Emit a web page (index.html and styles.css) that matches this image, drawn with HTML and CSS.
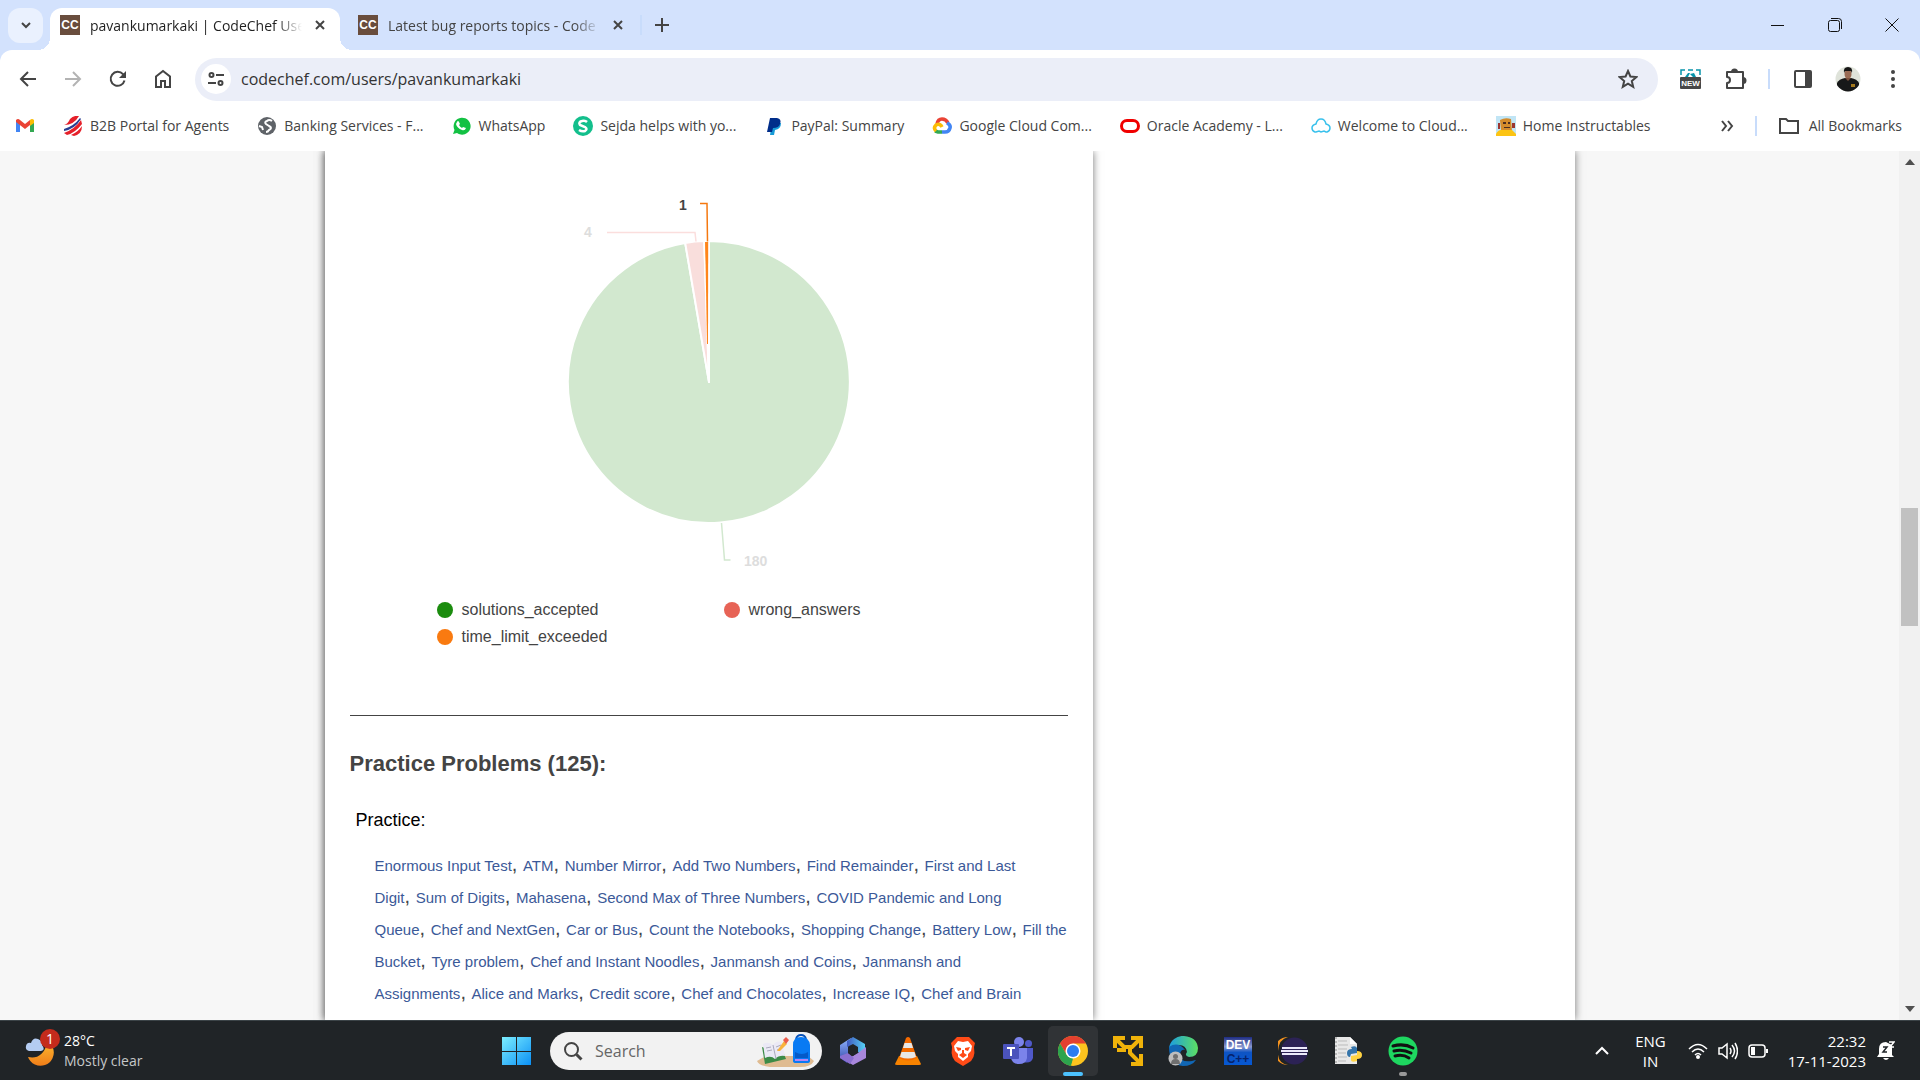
FILE: index.html
```html
<!DOCTYPE html>
<html lang="en">
<head>
  <meta charset="UTF-8">
  <title>pavankumarkaki | CodeChef User Profile</title>
  <link rel="stylesheet" href="styles.css">
</head>
<body>
  <!-- tab strip -->
  <header class="tab-strip">
    <button class="tab-search" aria-label="Search tabs"><svg width="12" height="12" viewBox="0 0 12 12"><path d="M2 4l4 4 4-4" class="line"/></svg></button>
    <div class="tab active">
      <span class="favicon">CC</span>
      <span class="tab-title">pavankumarkaki | CodeChef Use</span>
      <button class="tab-close" aria-label="Close tab"><svg width="12" height="12" viewBox="0 0 12 12"><path d="M2 2l8 8M10 2l-8 8" class="line"/></svg></button>
    </div>
    <div class="tab">
      <span class="favicon">CC</span>
      <span class="tab-title">Latest bug reports topics - Code</span>
      <button class="tab-close" aria-label="Close tab"><svg width="12" height="12" viewBox="0 0 12 12"><path d="M2 2l8 8M10 2l-8 8" class="line"/></svg></button>
    </div>
    <span class="divider"></span>
    <button class="new-tab" aria-label="New tab"><svg width="14" height="14" viewBox="0 0 14 14"><path d="M7 0v14M0 7h14" class="line"/></svg></button>
    <div class="window-buttons">
      <button aria-label="Minimize"><svg width="14" height="14" viewBox="0 0 14 14"><path d="M0 7.500h13" class="line thin"/></svg></button>
      <button aria-label="Restore"><svg width="14" height="14" viewBox="0 0 14 14"><rect x="0.500" y="2.500" width="11" height="11" rx="2" class="line thin"/><path d="M3 .5h7.500a3 3 0 0 1 3 3V11" class="line thin"/></svg></button>
      <button aria-label="Close"><svg width="14" height="14" viewBox="0 0 14 14"><path d="M.5.5l13 13M13.500.5l-13 13" class="line thin"/></svg></button>
    </div>
  </header>

  <!-- toolbar -->
  <div class="toolbar-wrap">
  <nav class="toolbar">
    <button aria-label="Back"><svg width="18" height="18" viewBox="0 0 18 18"><path d="M9 2L2 9l7 7M2 9h15" class="line"/></svg></button>
    <button class="disabled" aria-label="Forward"><svg width="18" height="18" viewBox="0 0 18 18"><path d="M9 2l7 7-7 7M16 9H1" class="line"/></svg></button>
    <button aria-label="Reload"><svg width="18" height="18" viewBox="0 0 18 18"><path d="M15.500 10.500A7 7 0 1 1 14 4.200L15.500 6" class="line"/><path d="M17 1v7h-7z" fill="#444"/></svg></button>
    <button aria-label="Home"><svg width="18" height="20" viewBox="0 0 18 20"><path d="M2 7.500l7-5.500 7 5.500V18h-5v-6H7v6H2z" class="line"/></svg></button>
    <div class="address-bar">
      <button class="site-info" aria-label="Site information"><svg width="16" height="16" viewBox="0 0 16 16"><circle cx="3.500" cy="4" r="2" class="line"/><path d="M8 4h8M0 12h8" class="line"/><circle cx="12.500" cy="12" r="2" class="line"/></svg></button>
      <input type="text" aria-label="Address" value="codechef.com/users/pavankumarkaki">
      <button class="star" aria-label="Bookmark this tab"><svg width="20" height="20" viewBox="0 0 20 20"><path d="M10 2l2.400 5.500 6 .5-4.600 4 1.400 5.800L10 14.700l-5.200 3.100L6.200 12 1.600 8l6-.5z" class="line"/></svg></button>
    </div>
    <button aria-label="Screenshot extension"><svg width="21" height="20" viewBox="0 0 21 20"><path d="M1 6V1h4M8 1h5M16 1h4v5" fill="none" stroke="#0794ab" stroke-width="1.500"/><path d="M5 8l3-4h2l-2 4zM10 5l4-1 2 4h-3z" fill="#0794ab"/><rect y="8" width="21" height="12" rx="1" fill="#484848"/><text x="10.500" y="17" class="new-text">NEW</text></svg></button>
    <button aria-label="Extensions"><svg width="22" height="22" viewBox="0 0 22 22"><path d="M2 4h16v16H2v-5a3 3 0 0 0 0-6z" class="line" stroke-linejoin="round"/><path d="M6 4a3.500 3.500 0 0 1 7 0zM18 9a3.500 3.500 0 0 1 0 7z" fill="#444"/></svg></button>
    <span class="divider"></span>
    <button aria-label="Side panel"><svg width="18" height="18" viewBox="0 0 18 18"><rect x="1" y="1" width="16" height="16" rx="1" class="line"/><path d="M11 1h6v16h-6z" fill="#444"/></svg></button>
    <button aria-label="Profile"><svg width="26" height="26" viewBox="0 0 26 26"><clipPath id="face"><circle cx="13" cy="13" r="12.500"/></clipPath><g clip-path="url(#face)"><path d="M0 0h26v26H0z" fill="#dfe3da"/><path d="M2 26V17q2-4 8-5h6q6 1 8 5v9z" fill="#171819"/><ellipse cx="13" cy="8" rx="3.500" ry="5" fill="#9a6c55"/><path d="M9 7q-1-6 4-6t4 6l-1-2h-6z" fill="#161616"/><path d="M10 12l3 3 3-3z" fill="#7c513d"/><path d="M16 18h4v3h-4z" fill="#a3791f"/></g></svg></button>
    <button aria-label="Menu"><svg width="6" height="20" viewBox="0 0 6 20"><circle cx="3" cy="3" r="2" fill="#444"/><circle cx="3" cy="10" r="2" fill="#444"/><circle cx="3" cy="17" r="2" fill="#444"/></svg></button>
  </nav>

  <!-- bookmarks -->
  <nav class="bookmarks">
    <a href="#" aria-label="Gmail"><svg width="20" height="20" viewBox="0 0 20 20"><path d="M1 4v12h4V8z" fill="#4285f4"/><path d="M15 8v8h4V4z" fill="#34a853"/><path d="M1 4q2-2 4 0l5 4 5-4v5l-5 4-9-7z" fill="#ea4335"/><path d="M15 4q2-2 4 0v3l-4 3z" fill="#fbbc04"/></svg></a>
    <a href="#"><svg width="20" height="20" viewBox="0 0 20 20"><path d="M1 9Q5 8 7 3q4-4 9-3Q11 9 1 9z" fill="#e5202a"/><path d="M1 17Q12 13 18 4l1 4Q12 17 4 19z" fill="#e5202a"/><path d="M1 13Q11 10 17 2l1 1Q12 13 1 15z" fill="#283d91"/><path d="M8 19q7-3 11-9 0 8-8 10z" fill="#e5202a"/></svg>B2B Portal for Agents</a>
    <a href="#"><svg width="20" height="20" viewBox="0 0 20 20"><circle cx="10" cy="10" r="9" fill="#5f6368"/><path d="M15 5q-3-2-5 0-3 1-1 3l3 2q4 2 0 4-1 2-3 2M2 10l3 1 1 3" fill="none" stroke="#fff" stroke-width="2"/></svg>Banking Services - F...</a>
    <a href="#"><svg width="20" height="20" viewBox="0 0 20 20"><path d="M2 18l1.500-4A8.500 8.500 0 1 1 6 17z" fill="#13c143"/><path d="M6 6q1-2 2 0l1 2-1 1q1 2 3 3l1-1 3 1q-1 3-4 2-5-2-6-6z" fill="#fff"/></svg>WhatsApp</a>
    <a href="#"><svg width="20" height="20" viewBox="0 0 20 20"><circle cx="10" cy="10" r="10" fill="#13bf8c"/><path d="M14 6Q12 4 9 5 5 6 7 9l5 2q3 2 0 4-3 1-6-1" fill="none" stroke="#fff" stroke-width="2.500"/></svg>Sejda helps with yo...</a>
    <a href="#"><svg width="20" height="20" viewBox="0 0 20 20"><path d="M8 7h9q0 6-6 7l-1 5H6z" fill="#179bd7"/><path d="M6 2h7q5 1 3 6-1 4-7 4l-1 4H3z" fill="#002d8a"/></svg>PayPal: Summary</a>
    <a href="#"><svg width="20" height="20" viewBox="0 0 20 20"><g fill="none" stroke-width="3.500"><path d="M5 8q1-5 5-5t6 4" stroke="#ea4335"/><path d="M15 7q4 2 3 5-1 4-5 4h-3" stroke="#4285f4"/><path d="M10 16H6l-3-1" stroke="#34a853"/><path d="M4 15q-3-3 0-6 4-2 6 2" stroke="#fbbc04"/></g></svg>Google Cloud Com...</a>
    <a href="#"><svg width="20" height="20" viewBox="0 0 20 20"><rect x="1.500" y="4.500" width="17" height="11" rx="5.500" fill="none" stroke="#f00000" stroke-width="3"/></svg>Oracle Academy - L...</a>
    <a href="#"><svg width="20" height="20" viewBox="0 0 20 20"><path d="M5 16H4q-3-1-3-4t4-4q1-5 5-5t5 5q4 1 4 4t-3 4h-1l-2-1-3 1-2-1z" fill="none" stroke="#39c1ec" stroke-width="1.500"/></svg>Welcome to Cloud...</a>
    <a href="#"><svg width="20" height="20" viewBox="0 0 20 20"><path d="M0 0h20v20H0z" fill="#c1e5f5"/><path d="M4 4q5-3 11-1l1 12H5z" fill="#d48c2c"/><path d="M7 6h3v2H7zM12 6h2v2h-2zM8 11h6v1H8z" fill="#4a2d20"/><path d="M0 18q2-4 5-4h11l4 4v2H0z" fill="#fcc413"/><path d="M2 7h2v6H2zM16 7h3v5h-3z" fill="#9c3632"/></svg>Home Instructables</a>
    <button class="more" aria-label="More bookmarks"><svg width="14" height="12" viewBox="0 0 14 12"><path d="M2 1l4 5-4 5M8 1l4 5-4 5" class="line"/></svg></button>
    <span class="divider"></span>
    <a href="#" class="all-bookmarks"><svg width="22" height="18" viewBox="0 0 22 18"><path d="M2 2h6l2 2h10v12H2z" class="line"/></svg>All Bookmarks</a>
  </nav>
  </div>

  <!-- page content -->
  <div class="viewport">
    <main class="page">
      <div class="container">
        <section class="profile">
          <svg class="pie" viewBox="0 0 718 434" role="img" aria-label="Submissions">
            <g stroke="#fff" stroke-width="2" stroke-linejoin="round">
              <path d="M359 231V90A141 141 0 1 1 335.200 92z" fill="#d2e8cf"/>
              <path d="M359 231L335.200 92A141 141 0 0 1 354.200 90.100z" fill="#f9dedc"/>
              <path d="M359 231L354.200 90.100A141 141 0 0 1 359 90z" fill="#ff851b"/>
            </g>
            <path d="M355.200 91h3l-.2 102h-1z" fill="#ff851b"/>
            <path d="M350 52.500h7l.5 38" fill="none" stroke="#f5780f" stroke-width="1.500"/>
            <path d="M257 81.500h88l1 9" fill="none" stroke="#fbdedd" stroke-width="1.500"/>
            <path d="M371.500 372l3 37h6" fill="none" stroke="#d2e8cf" stroke-width="1.500"/>
            <text x="329" y="59" class="value">1</text>
            <text x="234" y="86" class="value faded">4</text>
            <text x="394" y="415" class="value faded">180</text>
          </svg>
          <ul class="legend">
            <li><span class="dot green"></span>solutions_accepted</li>
            <li><span class="dot red"></span>wrong_answers</li>
            <li><span class="dot orange"></span>time_limit_exceeded</li>
          </ul>
          <hr>
          <h3>Practice Problems (125):</h3>
          <h5>Practice:</h5>
          <p class="problems">
            <a href="#">Enormous Input Test</a>, <a href="#">ATM</a>, <a href="#">Number Mirror</a>, <a href="#">Add Two Numbers</a>, <a href="#">Find Remainder</a>, <a href="#">First and Last<br>Digit</a>, <a href="#">Sum of Digits</a>, <a href="#">Mahasena</a>, <a href="#">Second Max of Three Numbers</a>, <a href="#">COVID Pandemic and Long<br>Queue</a>, <a href="#">Chef and NextGen</a>, <a href="#">Car or Bus</a>, <a href="#">Count the Notebooks</a>, <a href="#">Shopping Change</a>, <a href="#">Battery Low</a>, <a href="#">Fill the<br>Bucket</a>, <a href="#">Tyre problem</a>, <a href="#">Chef and Instant Noodles</a>, <a href="#">Janmansh and Coins</a>, <a href="#">Janmansh and<br>Assignments</a>, <a href="#">Alice and Marks</a>, <a href="#">Credit score</a>, <a href="#">Chef and Chocolates</a>, <a href="#">Increase IQ</a>, <a href="#">Chef and Brain</a>
          </p>
        </section>
      </div>
    </main>
    <div class="scrollbar">
      <svg width="10" height="6" viewBox="0 0 10 6"><path d="M0 6l5-6 5 6z" fill="#505050"/></svg>
      <div class="track"><div class="thumb"></div></div>
      <svg width="10" height="6" viewBox="0 0 10 6"><path d="M0 0l5 6 5-6z" fill="#505050"/></svg>
    </div>
  </div>

  <!-- taskbar -->
  <footer class="taskbar">
    <button class="weather">
      <span class="weather-icon"><svg width="32" height="32" viewBox="0 0 32 32"><defs><linearGradient id="moon" x2="0" y2="1"><stop stop-color="#fcb42d"/><stop offset="1" stop-color="#ef7d19"/></linearGradient></defs><path d="M28 13a13 13 0 1 1-25 9q14 3 19-13z" fill="url(#moon)"/><path d="M4 16q-4-1-3-5t5-3q2-6 7-4t4 6q4 5-1 6z" fill="#b4ccf2"/></svg><span class="badge">1</span></span>
      <span class="weather-text"><span>28°C</span><span class="dim">Mostly clear</span></span>
    </button>
    <div class="apps">
      <button class="app" aria-label="Start"><svg width="30" height="30" viewBox="0 0 30 30"><defs><linearGradient id="win" x2="1" y2="1"><stop stop-color="#7ceeff"/><stop offset="1" stop-color="#0b90f5"/></linearGradient></defs><path d="M0 1h14v14H0zM15 1h14v14H15zM0 16h14v13H0zM15 16h14v13H15z" fill="url(#win)"/></svg></button>
      <label class="search">
        <svg width="20" height="20" viewBox="0 0 20 20"><circle cx="8.500" cy="8.500" r="6.500" class="line"/><path d="M13.500 13.500l5 5" class="line bold"/></svg>
        <input type="text" placeholder="Search" aria-label="Search">
        <svg width="60" height="34" viewBox="0 0 60 34"><path d="M2 27l9-5h42l6 5q-3 6-14 6H15Q4 32 2 27z" fill="#dfbb91"/><path d="M7 13l3 17 21-5-2-5z" fill="#3c8b47"/><path d="M8 10q5-3 10 1 3-5 9-3l3 14q-6-1-10 3-4-4-10-1z" fill="#ebe9f5"/><path d="M18 11l3 14M11 14l5-1M12 17l5-1M21 13l5-2M22 16l5-2" stroke="#a9a9bd"/><path d="M22 17l7-10 3 3-7 7z" fill="#f8b33c"/><path d="M28 6l3-3 3 3-3 4z" fill="#eb5c4c"/><path d="M41 5q1-4 5-4t5 4" fill="none" stroke="#0751b8" stroke-width="2"/><path d="M38 27V11q0-8 8-8t9 8v16q0 2-3 2H41q-3 0-3-2z" fill="#087af3"/><path d="M40 18q7 4 13 0v6H40z" fill="#055ac8"/><path d="M40 25h13v2H40z" fill="#b384f5"/></svg>
      </label>
      <button class="app" aria-label="Microsoft 365"><svg width="30" height="30" viewBox="0 0 30 30"><defs><linearGradient id="m365" x2="0" y2="1"><stop stop-color="#8fb4ff"/><stop offset="1" stop-color="#3446a8"/></linearGradient><linearGradient id="m365b" x2="1"><stop stop-color="#4058c0"/><stop offset="1" stop-color="#55d0f5"/></linearGradient></defs><path d="M2 9L13 2l-3 9v9l-1 7-7-5z" fill="url(#m365)"/><path d="M9 5l6-4 12 7v13l-7-5v-5l-5-3-6 3z" fill="url(#m365b)"/><path d="M13 21l7-4 8-6v11l-13 7-9-5z" fill="#a887dc"/><path d="M2 20l8-3 6 5-4 6-10-6z" fill="#8a6fd0"/><path d="M15 10l4 2v5l-4 3-5-3v-5z" fill="#202427"/></svg></button>
      <button class="app" aria-label="VLC"><svg width="28" height="30" viewBox="0 0 28 30"><path d="M5 20h18l4 8q0 1-2 1H3q-2 0-2-1z" fill="#f78300"/><path d="M12 2q2-2 4 0l7 20q-9 5-18 0z" fill="#f56a00"/><path d="M10.500 7h7l1.500 5H9zM7.500 16h13l1.500 5q-8 3-16 0z" fill="#e7e7e7"/></svg></button>
      <button class="app" aria-label="Brave"><svg width="28" height="30" viewBox="0 0 28 30"><path d="M8 1h12l3 3 3 3-1 4q2 12-6 16l-5 3-5-3Q1 23 3 11L2 7l3-3z" fill="#ff4b17"/><path d="M9 5l5 1 5-1 4 5-1 5-3 3v3l-5 4-5-4v-3l-3-3-1-5z" fill="#fff"/><path d="M7 11l5 1v2l-3 1zM21 11l-5 1v2l3 1zM13 14h2v3l3 2-4 3-4-3 3-2z" fill="#ff4b17"/></svg></button>
      <button class="app" aria-label="Teams"><svg width="30" height="28" viewBox="0 0 30 28"><circle cx="16" cy="5" r="5" fill="#7b83eb"/><circle cx="25.500" cy="6.500" r="3.500" fill="#5059c9"/><path d="M20 11h10v10q-2 6-10 4z" fill="#5059c9"/><path d="M8 11h16v10q-1 6-8 6t-8-6z" fill="#7b83eb"/><rect y="7" width="16" height="15" rx="1" fill="#4b53bc"/><path d="M4 11h8M8 11v8" stroke="#fff" stroke-width="2"/></svg></button>
      <button class="app running current" aria-label="Chrome"><svg width="30" height="30" viewBox="0 0 30 30"><circle cx="15" cy="15" r="15" fill="#fcc31e"/><path d="M2 7.500a15 15 0 0 1 26 0H15l-6.500 11z" fill="#e3402f"/><path d="M2 7.500l6.500 11L15 22.500 13 30A15 15 0 0 1 2 7.500z" fill="#2da44e"/><path d="M13 30l8.500-11.500L17 19z" fill="#fcc31e"/><circle cx="15" cy="15" r="7.500" fill="#fff"/><circle cx="15" cy="15" r="6" fill="#2d7cf0"/></svg></button>
      <button class="app" aria-label="VMware"><svg width="30" height="30" viewBox="0 0 30 30"><g fill="none" stroke="#f0b30a" stroke-width="4"><path d="M2 12V2h10M18 2h10v10M28 18v10H18"/><path d="M2 2l9 9h8l9-9M17 12v5l11 11M11 11v3H4" /></g></svg></button>
      <button class="app" aria-label="Edge"><svg width="30" height="30" viewBox="0 0 30 30"><defs><linearGradient id="edge" x2="1"><stop stop-color="#1c9de0"/><stop offset="1" stop-color="#5ddf62"/></linearGradient></defs><path d="M1 12A14 14 0 0 1 16 0q13 1 14 12 0 9-9 9-5-1-2-5-1-7-8-7-6 0-10 3z" fill="url(#edge)"/><path d="M1 11q9-6 16 3-4-1-5 4 0 9 12 7 3-1 4-1-4 6-13 6Q1 29 1 11z" fill="#1167b5"/><circle cx="7.500" cy="22.500" r="7" fill="#bdbdbd"/><circle cx="7.500" cy="20.500" r="2.500" fill="#6f6f6f"/><path d="M3 28q0-5 4.500-5t4.500 5z" fill="#6f6f6f"/></svg></button>
      <button class="app" aria-label="Dev-C++"><svg width="30" height="30" viewBox="0 0 30 30"><defs><linearGradient id="dev" x2="0" y2="1"><stop stop-color="#1d2c83"/><stop offset=".35" stop-color="#8a98cf"/><stop offset=".55" stop-color="#0e54c4"/><stop offset="1" stop-color="#0658d3"/></linearGradient></defs><path d="M1 1h28v28H1z" fill="url(#dev)"/><text x="15" y="13" class="dev-text">DEV</text><text x="15" y="27" class="dev-text dark">C++</text></svg></button>
      <button class="app" aria-label="Eclipse"><svg width="30" height="30" viewBox="0 0 30 30"><path d="M10 1a14 14 0 0 0 0 28Q-1 27 0 15T10 1z" fill="#f7941e"/><circle cx="16.500" cy="15" r="13.500" fill="#2c2255"/><path d="M4 11h25v2H4zM3 14h27v2H3zM4 17h25v2H4z" fill="#eceafa"/></svg></button>
      <button class="app" aria-label="Python"><svg width="30" height="30" viewBox="0 0 30 30"><path d="M2 1h15l7 7v20H2z" fill="#e8e8e8"/><path d="M5 5h9M5 9h10M5 13h9M5 17h8M5 21h9M5 25h8" stroke="#bbb"/><path d="M3 1v27" stroke="#888" stroke-dasharray="2 2"/><path d="M17 1v7h7z" fill="#fff"/><path d="M18 11q5-2 6 1v5l-6 1-1 3q-3 0-3-4t5-4z" fill="#3675aa"/><path d="M24 15q5 0 5 4t-5 4v2q-6 2-6-1v-4l6-1z" fill="#ffd343"/></svg></button>
      <button class="app running" aria-label="Spotify"><svg width="30" height="30" viewBox="0 0 30 30"><circle cx="15" cy="15" r="14.500" fill="#1ed760"/><path d="M5 10q11-3 20 2M6 15q9-2 17 2M7 20q8-2 14 2" fill="none" stroke="#111" stroke-width="3" stroke-linecap="round"/></svg></button>
    </div>
    <div class="tray">
      <button aria-label="Show hidden icons"><svg width="14" height="9" viewBox="0 0 14 9"><path d="M1 8l6-6 6 6" class="line white"/></svg></button>
      <button class="lang"><span>ENG</span><span>IN</span></button>
      <button class="status" aria-label="Network, volume and battery">
        <svg width="20" height="16" viewBox="0 0 20 16"><path d="M1 6q9-9 18 0M4 9q6-6 12 0M7 12q3-3 6 0" class="line white light"/><circle cx="10" cy="14" r="2" fill="#fff"/></svg>
        <svg width="20" height="18" viewBox="0 0 20 18"><path d="M1 6h3l5-4v14l-5-4H1zM12 6q2 3 0 6M14 3q5 6 0 12M17 1q5 8 0 16" class="line white light"/></svg>
        <svg width="20" height="14" viewBox="0 0 20 14"><rect x="1" y="1" width="16" height="12" rx="3" class="line white light"/><path d="M3 3h4v8H3zM18 5h2v4h-2z" fill="#fff"/></svg>
      </button>
      <button class="clock"><span>22:32</span><span>17-11-2023</span></button>
      <button aria-label="Notifications"><svg width="18" height="20" viewBox="0 0 18 20"><path d="M2 8q0-7 7-7l6 3v10l2 2H0l2-3zM6 17h6q-3 4-6 0z" fill="#fff"/><path d="M6 6h4l-4 5h4" fill="none" stroke="#20262a" stroke-width="1.500"/><path d="M12 1h5l-4 5h4" fill="none" stroke="#fff" stroke-width="1.500"/></svg></button>
    </div>
  </footer>
</body>
</html>
```
FILE: styles.css
```css
* {
  box-sizing: border-box;
}
body {
  margin: 0;
  height: 100vh;
  display: flex;
  flex-direction: column;
  overflow: hidden;
  font-family: "Open Sans", "Noto Sans", sans-serif;
  font-size: 14px;
  color: #444;
}
button {
  border: none;
  padding: 0;
  background: none;
  color: inherit;
  font: inherit;
  display: flex;
  align-items: center;
  justify-content: center;
}
a {
  color: inherit;
  text-decoration: none;
}
svg {
  display: block;
  flex-shrink: 0;
}
.line {
  fill: none;
  stroke: #444;
  stroke-width: 2;
}
.line.bold {
  stroke-width: 3;
}
.line.thin {
  stroke: #111;
  stroke-width: 1;
}
.line.white {
  stroke: #fff;
}
.line.light {
  stroke-width: 1.5;
}
.divider {
  width: 2px;
  height: 20px;
  background: #c8dcfb;
}

/* tabs */
.tab-strip {
  height: 50px;
  display: flex;
  align-items: center;
  padding-left: 8px;
  background: #d3e2fd;
}
.tab-search {
  width: 35px;
  height: 35px;
  margin-right: 7px;
  border-radius: 12px;
  background: #eaf1fe;
}
.tab {
  width: 290px;
  height: 42px;
  display: flex;
  align-items: center;
  gap: 10px;
  padding: 0 12px 0 10px;
}
.tab + .tab {
  width: 300px;
  padding: 0 14px 0 18px;
}
.tab.active {
  align-self: flex-end;
  position: relative;
  padding-bottom: 8px;
  border-radius: 12px 12px 0 0;
  background: #fff;
  color: #1f1f1f;
}
.tab.active::before, .tab.active::after {
  content: "";
  position: absolute;
  bottom: 0;
  width: 12px;
  height: 12px;
}
.tab.active::before {
  left: -12px;
  background: radial-gradient(circle at 0 0, transparent 12px, #fff 12px);
}
.tab.active::after {
  right: -12px;
  background: radial-gradient(circle at 100% 0, transparent 12px, #fff 12px);
}
.favicon {
  width: 20px;
  height: 20px;
  flex-shrink: 0;
  background: #694d3d;
  color: #fff;
  font: bold 12px/20px "Liberation Sans", sans-serif;
  text-align: center;
}
.tab-title {
  flex: 1;
  white-space: nowrap;
  overflow: hidden;
  mask-image: linear-gradient(to right, #000 88%, transparent);
}
.tab-close {
  width: 16px;
  height: 16px;
}
.new-tab {
  margin-left: 13px;
}
.window-buttons {
  margin-left: auto;
  display: flex;
}
.window-buttons button {
  width: 57px;
  height: 50px;
}

/* toolbar */
.toolbar-wrap {
  background: #d3e2fd;
}
.toolbar {
  display: flex;
  align-items: center;
  height: 58px;
  padding: 0 5px;
  border-radius: 12px 12px 0 0;
  background: #fff;
}
.toolbar button {
  width: 45px;
  height: 40px;
}
.toolbar .disabled {
  opacity: 0.4;
}
.toolbar .divider {
  margin: 0 10px;
}
.toolbar .address-bar {
  flex: 1;
  height: 43px;
  display: flex;
  align-items: center;
  margin: 0 10px;
  padding: 0 8px 0 6px;
  border-radius: 22px;
  background: #ebeef8;
}
.toolbar .site-info {
  width: 30px;
  height: 30px;
  border-radius: 50%;
  background: #fff;
}
.address-bar input {
  flex: 1;
  margin-left: 10px;
  padding: 0;
  border: none;
  outline: none;
  background: none;
  color: #333;
  font: 16px "Open Sans", sans-serif;
}
.new-text {
  font: bold 8px "Liberation Sans", sans-serif;
  fill: #fff;
  text-anchor: middle;
}

/* bookmarks bar */
.bookmarks {
  display: flex;
  align-items: center;
  gap: 28px;
  height: 43px;
  padding: 0 18px 8px 15px;
  background: #fff;
}
.bookmarks a {
  display: flex;
  align-items: center;
  gap: 7px;
  white-space: nowrap;
}
.bookmarks .more {
  margin-left: auto;
}
.bookmarks .divider {
  margin: 0 -7px;
}
.bookmarks .all-bookmarks {
  gap: 9px;
}

/* page */
.viewport {
  flex: 1;
  min-height: 0;
  display: flex;
  background: #f7f7f7;
}
.page {
  flex: 1;
  display: flex;
  justify-content: center;
  overflow: hidden;
}
.container {
  flex: 1;
  display: flex;
  align-items: stretch;
  max-width: 1250px;
  background: #fff;
  box-shadow: 0 0 8px #777;
}
.profile {
  width: 768px;
  padding: 0 25px;
  background: #fff;
  box-shadow: 0 0 8px #777;
  font-family: "Liberation Sans", Arial, sans-serif;
}
.pie {
  width: 100%;
}
.value {
  font: bold 14px "Liberation Sans", Arial, sans-serif;
  fill: #444;
}
.value.faded {
  fill: #ddd;
}
.legend {
  display: grid;
  grid-template-columns: 287px 287px;
  justify-content: center;
  margin: 0;
  padding: 11px 0 0 30px;
  list-style: none;
  font-size: 16px;
  line-height: 27px;
}
.legend li {
  display: flex;
  align-items: center;
  gap: 9px;
}
.dot {
  width: 16px;
  height: 16px;
  border-radius: 50%;
}
.green { background: #1b8c0e; }
.red { background: #e76356; }
.orange { background: #f97a10; }
hr {
  margin: 65px 0 0;
  border: none;
  border-top: 1px solid #444;
}
h3 {
  margin: 32px 0 0;
  font-size: 22px;
  line-height: 32px;
}
h5 {
  margin: 28px 6px 0;
  font-size: 18px;
  font-weight: normal;
  line-height: 24px;
  color: #000;
}
.problems {
  margin: 16px 0 0;
  padding-left: 25px;
  font-size: 20px;
  line-height: 32px;
  white-space: nowrap;
}
.problems a {
  font-size: 15px;
  line-height: 20px;
  color: #3b5998;
}

.scrollbar {
  width: 21px;
  display: flex;
  flex-direction: column;
  align-items: center;
  padding: 8px 0;
  background: #f1f1f1;
}
.track {
  flex: 1;
  width: 17px;
  display: flex;
  flex-direction: column;
}
.thumb {
  height: 14%;
  margin-top: 343px;
  background: #c1c1c1;
}

/* taskbar */
.taskbar {
  height: 60px;
  display: grid;
  grid-template-columns: 1fr auto 1fr;
  align-items: center;
  border-top: 1px solid #3b4347;
  background: #202427;
  color: #fff;
  font-size: 15px;
}
.weather {
  justify-self: start;
  gap: 7px;
  margin-left: 25px;
}
.weather-icon {
  position: relative;
}
.badge {
  position: absolute;
  top: -6px;
  right: -3px;
  width: 20px;
  height: 20px;
  border-radius: 50%;
  background: #c42b1c;
  font-size: 14px;
  line-height: 20px;
}
.weather-text, .lang, .clock {
  display: flex;
  flex-direction: column;
  line-height: 20px;
}
.weather-text {
  align-items: flex-start;
  font-size: 14px;
}
.dim {
  color: #c6c8c9;
}
.apps {
  display: flex;
  align-items: center;
  gap: 5px;
}
.app {
  position: relative;
  width: 50px;
  height: 50px;
  border-radius: 5px;
}
.app.current {
  background: #303336;
}
.running::after {
  content: "";
  position: absolute;
  bottom: 0;
  width: 8px;
  height: 4px;
  border-radius: 2px;
  background: #999;
}
.current::after {
  width: 20px;
  background: #4cc2ff;
}
.dev-text {
  font: bold 12px "Liberation Sans", sans-serif;
  fill: #fff;
  text-anchor: middle;
}
.dev-text.dark {
  fill: #06226b;
}
.search {
  width: 272px;
  height: 38px;
  display: flex;
  align-items: center;
  gap: 12px;
  margin: 0 1px 0 3px;
  padding: 0 7px 0 13px;
  border-radius: 19px;
  background: #f2f2f2;
}
.search input {
  flex: 1;
  min-width: 0;
  padding: 0;
  border: none;
  background: none;
  font: 16px "Open Sans", sans-serif;
}
.search input::placeholder {
  color: #666;
}
.tray {
  display: flex;
  align-items: center;
  justify-content: flex-end;
  padding-right: 25px;
}
.lang {
  margin: 0 22px 0 26px;
}
.status {
  gap: 10px;
}
.clock {
  align-items: flex-end;
  margin: 0 11px 0 20px;
}
```
